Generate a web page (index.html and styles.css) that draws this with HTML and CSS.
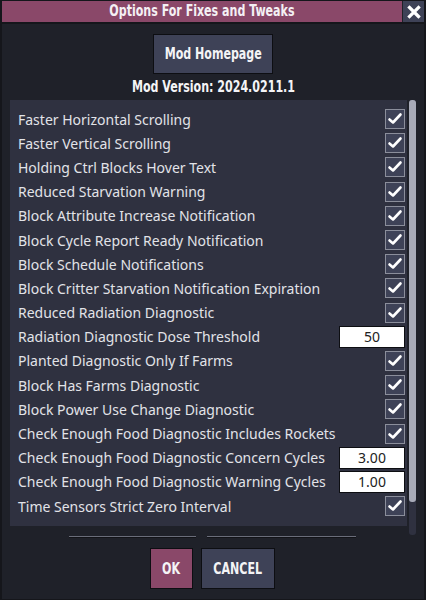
FILE: index.html
```html
<!DOCTYPE html>
<html>
<head>
<meta charset="utf-8">
<link rel="stylesheet" href="styles.css">
</head>
<body>
<div class="window">
  <div class="titlebar">
    <div class="title"><span class="cond">Options For Fixes and Tweaks</span></div>
    <div class="close">
      <svg width="14" height="14" viewBox="0 0 14 14"><path d="M2.5 2.5 L11.5 11.5 M11.5 2.5 L2.5 11.5" stroke="#fff" stroke-width="3.2" stroke-linecap="square"/></svg>
    </div>
  </div>
  <div class="content">
    <div class="top">
      <div class="btn homepage"><span class="cond">Mod Homepage</span></div>
      <div class="version"><span class="cond">Mod Version: 2024.0211.1</span></div>
    </div>
    <div class="list-area">
      <div class="panel">
        <div class="row"><span class="label">Faster Horizontal Scrolling</span><span class="cb"></span></div>
        <div class="row"><span class="label">Faster Vertical Scrolling</span><span class="cb"></span></div>
        <div class="row"><span class="label">Holding Ctrl Blocks Hover Text</span><span class="cb"></span></div>
        <div class="row"><span class="label">Reduced Starvation Warning</span><span class="cb"></span></div>
        <div class="row"><span class="label">Block Attribute Increase Notification</span><span class="cb"></span></div>
        <div class="row"><span class="label">Block Cycle Report Ready Notification</span><span class="cb"></span></div>
        <div class="row"><span class="label">Block Schedule Notifications</span><span class="cb"></span></div>
        <div class="row"><span class="label">Block Critter Starvation Notification Expiration</span><span class="cb"></span></div>
        <div class="row"><span class="label">Reduced Radiation Diagnostic</span><span class="cb"></span></div>
        <div class="row"><span class="label">Radiation Diagnostic Dose Threshold</span><span class="field">50</span></div>
        <div class="row"><span class="label">Planted Diagnostic Only If Farms</span><span class="cb"></span></div>
        <div class="row"><span class="label">Block Has Farms Diagnostic</span><span class="cb"></span></div>
        <div class="row"><span class="label">Block Power Use Change Diagnostic</span><span class="cb"></span></div>
        <div class="row"><span class="label">Check Enough Food Diagnostic Includes Rockets</span><span class="cb"></span></div>
        <div class="row"><span class="label">Check Enough Food Diagnostic Concern Cycles</span><span class="field">3.00</span></div>
        <div class="row"><span class="label">Check Enough Food Diagnostic Warning Cycles</span><span class="field">1.00</span></div>
        <div class="row"><span class="label">Time Sensors Strict Zero Interval</span><span class="cb"></span></div>
      </div>
      <div class="scrollbar"><div class="thumb"></div></div>
    </div>
    <div class="lines">
      <span class="line l1"></span>
      <span class="line l2"></span>
    </div>
    <div class="actions">
      <div class="btn ok"><span class="cond">OK</span></div>
      <div class="btn cancel"><span class="cond">CANCEL</span></div>
    </div>
  </div>
</div>
</body>
</html>
```
FILE: styles.css
```css
html, body {
  margin: 0;
  padding: 0;
  background: #15161b;
}
.window {
  width: 426px;
  height: 600px;
  box-sizing: border-box;
  border: 1px solid #15161b;
  border-left-width: 2px;
  border-right-width: 2px;
  background: #1f2129;
  display: flex;
  flex-direction: column;
}
.cond {
  display: inline-block;
  white-space: nowrap;
  transform: scaleX(0.82);
  transform-origin: center;
}
.titlebar {
  height: 21px;
  display: flex;
  border-bottom: 2px solid #15161b;
}
.title {
  flex: 1;
  background: #8a4869;
  color: #f4f0f4;
  font-family: "DejaVu Sans Condensed", "DejaVu Sans", sans-serif;
  font-weight: bold;
  font-size: 15px;
  text-align: center;
  line-height: 21px;
}
.close {
  width: 21px;
  margin-left: 1px;
  background: #3e4257;
  display: flex;
  align-items: center;
  justify-content: center;
}
.content {
  flex: 1;
  display: flex;
  flex-direction: column;
}
.top {
  display: flex;
  flex-direction: column;
  align-items: center;
  padding-top: 10px;
}
.btn {
  box-sizing: border-box;
  border: 1px solid #0d0e12;
  color: #f4f4f6;
  font-family: "DejaVu Sans Condensed", "DejaVu Sans", sans-serif;
  font-weight: bold;
  display: flex;
  align-items: center;
  justify-content: center;
}
.homepage {
  width: 120px;
  height: 40px;
  background: #3e4257;
  font-size: 15px;
}
.version {
  color: #f4f4f6;
  font-family: "DejaVu Sans Condensed", "DejaVu Sans", sans-serif;
  font-weight: bold;
  font-size: 15px;
  line-height: 16px;
  margin-top: 5px;
}
.list-area {
  display: flex;
  margin-top: 5px;
  padding-left: 8px;
}
.panel {
  width: 397px;
  height: 426px;
  box-sizing: border-box;
  background: #2f3140;
  padding: 7px 2px 0 8px;
}
.row {
  height: 24.2px;
  display: flex;
  align-items: center;
  justify-content: space-between;
}
.label {
  color: #e2e3e8;
  font-family: "Noto Sans", sans-serif;
  font-size: 14px;
}
.cb {
  width: 20px;
  height: 20px;
  box-sizing: border-box;
  border: 1px solid #8b8e9b;
  background: #3e4257 url("data:image/svg+xml;utf8,<svg xmlns='http://www.w3.org/2000/svg' width='18' height='18' viewBox='0 0 18 18'><path d='M3.5 9.5 L7 12.5 L14.5 4.5' fill='none' stroke='white' stroke-width='2.6' stroke-linecap='round' stroke-linejoin='round'/></svg>") center/18px 18px no-repeat;
}
.field {
  width: 66px;
  height: 22px;
  box-sizing: border-box;
  border: 1px solid #0d0e12;
  background: #fff;
  color: #222;
  font-family: "Noto Sans", sans-serif;
  font-size: 14px;
  text-align: center;
  line-height: 20px;
}
.scrollbar {
  width: 7px;
  height: 435px;
  margin-left: 2px;
  background: #2f3140;
  border-radius: 3px;
}
.thumb {
  height: 402px;
  background: #a8abb8;
  border-radius: 3px;
}
.lines {
  display: flex;
  margin-top: 1px;
  padding-left: 67px;
  gap: 11px;
}
.line {
  height: 1px;
  background: #6a6d7a;
  border-bottom: 1px solid #121318;
}
.l1 { width: 127px; }
.l2 { width: 149px; }
.actions {
  display: flex;
  justify-content: center;
  gap: 8px;
  margin-top: 10px;
  padding-right: 2px;
}
.ok {
  width: 43px;
  height: 41px;
  background: #8a4869;
  font-size: 15px;
}
.cancel {
  width: 74px;
  height: 41px;
  background: #3e4257;
  font-size: 15px;
}
```
